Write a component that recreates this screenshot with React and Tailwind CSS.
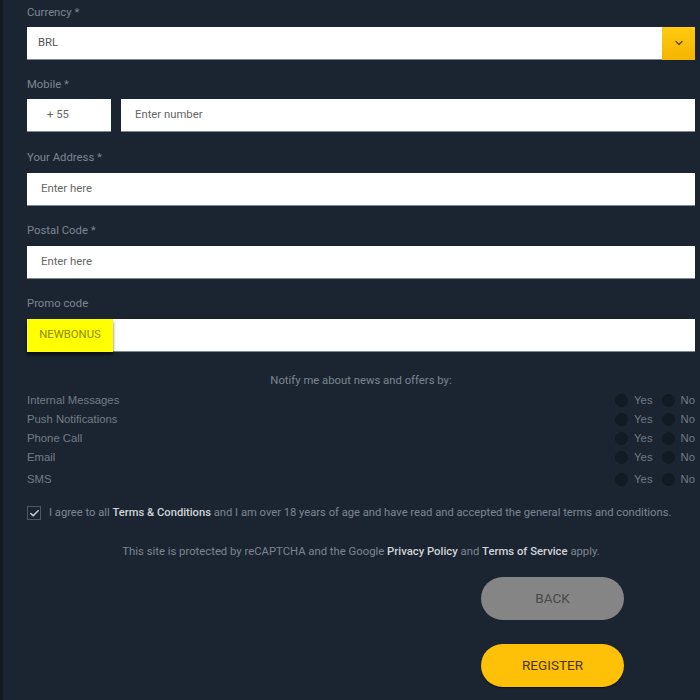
import { ChevronDown, Check } from 'lucide-react';

const Label = ({ children }) => (
    <div className="h-4 leading-4 text-[11.3px] text-[#7b8591] mb-[7px]">{children}</div>
);

const inputCls = 'h-[33px] bg-white border-b border-[#7d8790] flex items-center text-[11.3px] text-[#666]';

const prefs = ['Internal Messages', 'Push Notifications', 'Phone Call', 'Email', 'SMS'];

const App = () => {
    return (
        <div className="w-[700px] h-[700px] bg-[#1b2531] border-l-[3px] border-[#131a22] overflow-hidden font-['Roboto',sans-serif]">
            <div className="pl-[24px] pr-[5px] pt-[5px] flex flex-col">
                {/* Currency */}
                <Label>Currency *</Label>
                <div className={`${inputCls} justify-between -mt-[1px]`}>
                    <span className="pl-[11px] text-[#555]">BRL</span>
                    <div className="w-[33px] h-[33px] bg-gradient-to-b from-[#ffcb10] to-[#f5b500] flex items-center justify-center">
                        <ChevronDown size={12} strokeWidth={2.6} className="text-[#5c4300]" />
                    </div>
                </div>

                {/* Mobile */}
                <div className="mt-[17px]"><Label>Mobile *</Label></div>
                <div className="flex gap-[10px] -mt-[1px]">
                    <div className={`${inputCls} w-[84px] pl-[20px]`}>+ 55</div>
                    <div className={`${inputCls} flex-1 pl-[14px]`}>Enter number</div>
                </div>

                <div className="mt-[18px]"><Label>Your Address *</Label></div>
                <div className={`${inputCls} pl-[14px]`}>Enter here</div>

                <div className="mt-[17px]"><Label>Postal Code *</Label></div>
                <div className={`${inputCls} pl-[14px]`}>Enter here</div>

                <div className="mt-[17px]"><Label>Promo code</Label></div>
                <div className={`${inputCls}`}>
                    <span className="h-[33px] w-[86px] bg-[#ffff00] text-[#8c8a00] flex items-center justify-center shadow-[0_3px_3px_rgba(0,0,0,0.6)]">NEWBONUS</span>
                </div>

                {/* Notifications */}
                <div className="mt-[21px] mb-[2px] h-4 leading-4 text-center text-[11.3px] text-[#7b8591]">Notify me about news and offers by:</div>
                <div className="flex flex-col font-['Liberation_Sans',sans-serif] text-[11.3px] text-[#727c87]">
                    {prefs.map((p, i) => (
                        <div key={p} className={`h-[19px] flex items-center justify-between ${i === 4 ? 'mt-[3px]' : ''}`}>
                            <span>{p}</span>
                            <div className="flex items-center">
                                <span className="w-[13px] h-[13px] rounded-full bg-[#121a23]"></span>
                                <span className="ml-[6px] text-[#6f7984]">Yes</span>
                                <span className="ml-[9px] w-[13px] h-[13px] rounded-full bg-[#121a23]"></span>
                                <span className="ml-[6px] text-[#6f7984]">No</span>
                            </div>
                        </div>
                    ))}
                </div>

                {/* Terms */}
                <div className="mt-[16px] flex items-center gap-[8px] text-[11.2px] text-[#7b8591] whitespace-nowrap">
                    <span className="w-[14px] h-[14px] border border-[#4c5864] flex items-center justify-center">
                        <Check size={11} strokeWidth={3.5} className="text-[#c3c9cf]" />
                    </span>
                    <span>
                        I agree to all <span className="text-[#cfd4d9] font-medium">Terms &amp; Conditions</span> and I am over 18 years of age and have read and accepted the general terms and conditions.
                    </span>
                </div>

                <div className="mt-[22px] text-center text-[11.3px] text-[#7b8591]">
                    This site is protected by reCAPTCHA and the Google <span className="text-[#cfd4d9] font-medium">Privacy Policy</span> and <span className="text-[#cfd4d9] font-medium">Terms of Service</span> apply.
                </div>

                {/* Buttons */}
                <div className="mt-[16px] flex flex-col items-end pr-[71px] gap-[24px]">
                    <button className="w-[143px] h-[43px] rounded-full bg-[#858585] text-[#4a4a4a] text-[13.5px]">BACK</button>
                    <button className="w-[143px] h-[43px] rounded-full bg-[#fec107] text-[#4a3500] text-[13.5px] shadow-[0_1px_1px_rgba(0,0,0,0.6)]">REGISTER</button>
                </div>
            </div>
        </div>
    );
};

export default App;
